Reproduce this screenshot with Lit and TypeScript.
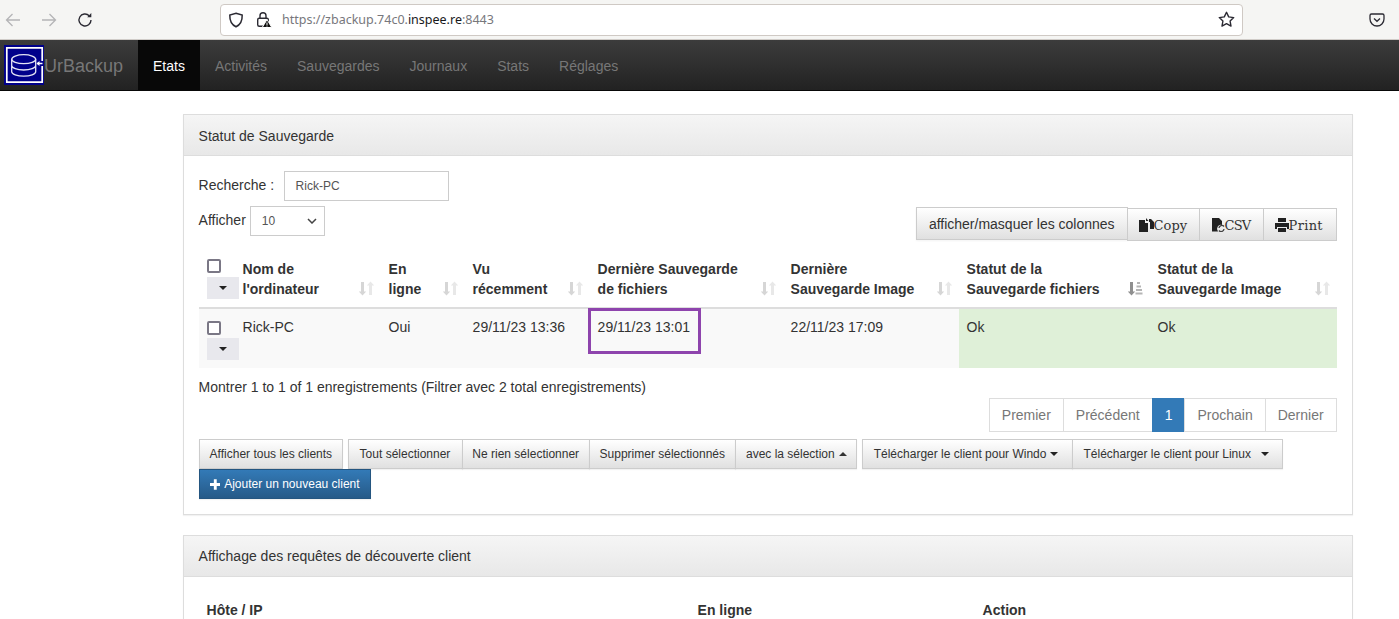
import { LitElement, html, css, svg } from "lit";
import { customElement } from "lit/decorators.js";

const sortBoth = svg`<svg class="sort" width="15" height="15" viewBox="0 0 15 15"><path d="M2 1h3v9.500h2.200L3.500 14.500-.2 10.500H2z" fill="#d6d6d6"/><path d="M10 14h3V4.500h2.200L11.500.5 7.800 4.500H10z" fill="#e8e8e8"/></svg>`;
const sortAmt = svg`<svg class="sort" width="15" height="15" viewBox="0 0 15 15"><path d="M2 1h3v9.500h2.200L3.500 14.500-.2 10.500H2z" fill="#8f8f8f"/><path d="M9 1h3v2H9zM8.500 4.500h4.500v2H8.500zM8 8h6v2H8zM7.500 11.500h7v2h-7z" fill="#b5b5b5"/></svg>`;

@customElement("app-root")
export class AppRoot extends LitElement {
  static styles = css`
    :host { display: block; height: 619px; overflow: hidden; background: #fff; font-family: "Liberation Sans", Arial, sans-serif; font-size: 14px; line-height: 20px; color: #333; }
    * { box-sizing: border-box; }
    .chrome { height: 40px; background: #f5f5f3; border-bottom: 1px solid #d0ccc8; display: flex; align-items: center; padding: 0 0 0 5px; }
    .nav-ic { width: 16px; height: 16px; display: block; }
    .ic-back { margin-right: 20px; }
    .ic-fwd { margin-right: 20px; }
    .url { margin-left: 127px; width: 1023px; height: 32px; background: #fff; border: 1px solid #cfc9c4; border-radius: 4px; display: flex; align-items: center; padding-left: 7px; font-family: "Noto Sans", sans-serif; font-size: 12.5px; color: #77777c; }
    .url b { font-weight: 400; color: #17171a; }
    .url .shield { margin-right: 11px; }
    .url .lock { margin-right: 10px; }
    .url .addr { flex: 1; white-space: nowrap; }
    .url .star { margin-right: 7px; }
    .pocket { margin-left: 126px; }
    .navbar { height: 51px; background: linear-gradient(#3c3c3c, #222); border-bottom: 1px solid #080808; display: flex; }
    .brand { width: 138px; display: flex; align-items: center; padding-left: 4px; font-size: 18px; color: #777; }
    .brand span { padding-top: 1px; }
    .logo { display: block; width: 40px; height: 40px; }
    .navbar a { display: block; padding: 16px 15px 14px; line-height: 20px; color: #777; font-size: 14px; }
    .navbar a.active { color: #fff; background: #080808; }
    .main { padding: 23px 46.400px 0 182.600px; }
    .panel { border: 1px solid #ddd; margin-bottom: 20px; box-shadow: 0 1px 1px rgba(0,0,0,.05); }
    .head { height: 41px; padding: 10px 15px; background: linear-gradient(#f5f5f5, #e8e8e8); border-bottom: 1px solid #ddd; color: #333; }
    .head.first { padding-top: 11px; }
    .body { padding: 15px; }
    .search-row { height: 30px; display: flex; align-items: center; }
    .search-row span { position: relative; top: -1px; }
    .search { margin-left: 9.500px; width: 165px; height: 30px; border: 1px solid #ccc; padding: 0 11px; display: flex; align-items: center; font-size: 12px; color: #555; }
    .len-row { display: flex; justify-content: space-between; height: 36px; margin-top: 5px; }
    .len { display: flex; height: 30px; align-items: center; gap: 4px; }
    .len span { position: relative; top: -1px; }
    .select { width: 75px; height: 30px; border: 1px solid #ccc; display: flex; justify-content: space-between; align-items: center; padding: 0 7px 0 11px; font-size: 12px; color: #555; }
    .tools { display: flex; align-items: flex-start; margin-top: 1px; }
    .btn { background: linear-gradient(#fff, #e0e0e0); border: 1px solid #ccc; color: #333; white-space: nowrap; display: flex; align-items: center; }
    .tools .main-b { height: 33px; padding: 0 12px; box-shadow: 0 1px 2px rgba(0,0,0,.05); }
    .tools .ex { height: 33px; margin-top: 1px; margin-left: -1px; padding: 0 12px 0 11px; font-family: "DejaVu Serif", serif; font-size: 13px; position: relative; }
    .tools .ex span { position: relative; top: 1px; }
    .tools .ex svg { display: block; flex: none; }
    .tools .copy { width: 73px; margin-left: -1px; }
    .tools .csv { width: 65px; letter-spacing: -.9px; }
    .tools .print { width: 74px; letter-spacing: .3px; }
    table { width: 100%; table-layout: fixed; border-collapse: collapse; margin-top: 8px; }
    th { text-align: left; font-weight: 700; padding: 8px; vertical-align: bottom; border-bottom: 2px solid #ddd; position: relative; height: 58px; }
    th .sort { position: absolute; right: 7px; bottom: 11px; }
    td { padding: 8px; vertical-align: top; height: 60px; background: #f9f9f9; position: relative; }
    td.ok { background: #dff0d8; }
    th.sel, td.sel { padding: 0 8px; vertical-align: top; }
    th.sel { padding-top: 9px; }
    td.sel { padding-top: 12px; }
    .check { width: 14px; height: 14px; border: 2px solid #7a7785; border-radius: 2px; background: #fff; display: block; }
    th .check { margin-bottom: 4px; }
    td .check { margin-bottom: 3px; }
    .drop { width: 32px; height: 22px; background: #e8e8ed; display: flex; align-items: center; justify-content: center; position: relative; z-index: 1; }
    .caret { display: inline-block; width: 0; height: 0; border-left: 4px solid transparent; border-right: 4px solid transparent; border-top: 4px solid #222; }
    .caret.up { border-top: 0; border-bottom: 4px solid #333; }
    .mark { position: absolute; left: -2px; top: -1px; width: 113px; height: 46px; border: 3px solid #8e44ad; pointer-events: none; }
    .info { margin-top: 9px; height: 21px; }
    .pager-row { display: flex; justify-content: flex-end; }
    .pager { display: flex; height: 34px; }
    .pager a { padding: 6px 12px; border: 1px solid #ddd; margin-left: -1px; color: #777; background: #fff; }
    .pager a.on { background: #337ab7; border-color: #337ab7; color: #fff; }
    .actions { display: flex; flex-wrap: wrap; margin-top: 7px; font-size: 12px; line-height: 18px; }
    .actions .btn { height: 30px; padding: 0 10px; margin-left: -1px; box-shadow: 0 1px 1px rgba(0,0,0,.05); }
    .actions .btn:first-child { margin-left: 0; }
    .actions .gap { margin-left: 5px; }
    .actions .btn .caret { margin-left: 4px; }
    .actions .tout { padding: 0 11.500px 0 10.500px; }
    .actions .nerien { padding: 0 9.500px; }
    .actions .avec { padding: 0 9.500px 0 10px; }
    .actions .dl { padding: 0 13.500px 0 10.500px; }
    .actions .btn .caret.wide { margin-left: 10px; }
    .actions .break { flex-basis: 100%; height: 0; }
    .actions .add { margin-left: 0; background: linear-gradient(#337ab7, #265a88); border-color: #245580; color: #fff; width: 172px; gap: 4px; }
    .sub { display: grid; grid-template-columns: 491px 285px 1fr; padding: 8px; font-weight: 700; }
  `;

  render() {
    return html`
      <div class="chrome">
        <svg class="nav-ic ic-back" viewBox="0 0 16 16" fill="none" stroke="#b4b4b6" stroke-width="1.300"><path d="M15 8H1.500M7.500 2 1.500 8l6 6"/></svg>
        <svg class="nav-ic ic-fwd" viewBox="0 0 16 16" fill="none" stroke="#b4b4b6" stroke-width="1.300"><path d="M1 8h13.500M8.500 2l6 6-6 6"/></svg>
        <svg class="nav-ic" viewBox="0 0 16 16" fill="none" stroke="#2b2a33" stroke-width="1.400"><path d="M14 8a6 6 0 1 1-1.800-4.300"/><path d="M14.300 1v4.200H10.200" fill="#2b2a33" stroke="none"/></svg>
        <div class="url">
          <svg class="shield" width="16" height="16" viewBox="0 0 16 16" fill="none" stroke="#2b2a33" stroke-width="1.500"><path d="M8 1.200 14.200 3c.2 6-1.500 9.600-6.200 11.800C3.300 12.600 1.600 9 1.800 3z"/></svg>
          <svg class="lock" width="17" height="17" viewBox="0 0 17 17"><path d="M5 7.500V4.800a3 3 0 0 1 6 0v2.700" fill="none" stroke="#2b2a33" stroke-width="1.400"/><rect x="2.700" y="7.300" width="10.600" height="8" rx="1.500" fill="#fff" stroke="#2b2a33" stroke-width="1.400"/><path d="M12 8.500l4.800 8H7.200z" fill="#111" stroke="#fff"/><path d="M11.500 11.500h1v2.500h-1zM11.500 14.600h1v1h-1z" fill="#fff"/></svg>
          <span class="addr">https://zbackup.74c0.<b>inspee.re</b>:8443</span>
          <svg class="star" width="17" height="17" viewBox="0 0 17 17" fill="none" stroke="#2b2a33" stroke-width="1.400" stroke-linejoin="round"><path d="M8.500 1.300l2.200 4.600 5 .7-3.600 3.500.9 5-4.500-2.400L4 15.100l.9-5L1.300 6.600l5-.7z"/></svg>
        </div>
        <svg class="pocket" width="16" height="16" viewBox="0 0 16 16" fill="none" stroke="#2b2a33" stroke-width="1.300"><path d="M2.500 2h11A1.500 1.500 0 0 1 15 3.500V7a7 7 0 0 1-14 0V3.500A1.500 1.500 0 0 1 2.500 2z"/><path d="M5 6.500l3 2.800 3-2.800"/></svg>
      </div>
      <div class="navbar">
        <div class="brand">
          <svg class="logo" viewBox="0 0 40 40"><rect width="40" height="40" fill="#00008b"/><path d="M38.200 16V2.800H2.800v34.400h35.400V21" fill="none" stroke="#fff" stroke-width="1.700"/><g fill="none" stroke="#e4e4f4" stroke-width="1.300"><ellipse cx="19.700" cy="14.200" rx="12" ry="4.500"/><path d="M7.700 14.200v12.500c0 2.500 5.400 4.500 12 4.500s12-2 12-4.500V14.200M7.700 20.500c0 2.500 5.400 4.500 12 4.500s12-2 12-4.500"/></g><path d="M33 18.500h5.500" stroke="#fff" stroke-width="1.500"/><path d="M32.500 18.500l3-2.600v5.200z" fill="#fff"/></svg>
          <span>UrBackup</span>
        </div>
        <a class="active">Etats</a><a>Activités</a><a>Sauvegardes</a><a>Journaux</a><a>Stats</a><a>Réglages</a>
      </div>
      <div class="main">
        <section class="panel">
          <div class="head first">Statut de Sauvegarde</div>
          <div class="body">
            <div class="search-row"><span>Recherche :</span><div class="search">Rick-PC</div></div>
            <div class="len-row">
              <div class="len"><span>Afficher</span><div class="select">10
                <svg width="10" height="6" viewBox="0 0 10 6" fill="none" stroke="#444" stroke-width="1.500"><path d="M1 1l4 4 4-4"/></svg></div></div>
              <div class="tools">
                <div class="btn main-b">afficher/masquer les colonnes</div>
                <div class="btn ex copy"><svg width="15" height="14" viewBox="0 0 15 14"><path d="M0 2h6v3h3v9H0z" fill="#222"/><path d="M7 0l2.500 3H7zM10 1h2l3 3v7h-4V4h-1z" fill="#222"/></svg><span>Copy</span></div>
                <div class="btn ex csv"><svg width="14" height="15" viewBox="0 0 14 15"><path d="M1 1h7l3 3v4a4 4 0 0 0-4 6.500H1z" fill="#222"/><path d="M8 11a2.800 2.800 0 0 1 5-1.500M13 12a2.800 2.800 0 0 1-5 1.500" fill="none" stroke="#444" stroke-width="1.300"/></svg><span>CSV</span></div>
                <div class="btn ex print"><svg width="14" height="14" viewBox="0 0 14 14"><path d="M3 0h8v4H3zM0 5h14v6h-2V9H2v2H0zM3 10h8v4H3z" fill="#222"/></svg><span>Print</span></div>
              </div>
            </div>
            <table>
              <colgroup><col style="width:36px"><col style="width:146px"><col style="width:84px"><col style="width:125px"><col style="width:193px"><col style="width:176px"><col style="width:191px"><col style="width:187px"></colgroup>
              <thead><tr>
                <th class="sel"><span class="check"></span><div class="drop"><span class="caret"></span></div></th>
                <th>Nom de<br>l'ordinateur${sortBoth}</th>
                <th>En<br>ligne${sortBoth}</th>
                <th>Vu<br>récemment${sortBoth}</th>
                <th>Dernière Sauvegarde<br>de fichiers${sortBoth}</th>
                <th>Dernière<br>Sauvegarde Image${sortBoth}</th>
                <th>Statut de la<br>Sauvegarde fichiers${sortAmt}</th>
                <th>Statut de la<br>Sauvegarde Image${sortBoth}</th>
              </tr></thead>
              <tbody><tr>
                <td class="sel"><span class="check"></span><div class="drop"><span class="caret"></span></div></td>
                <td>Rick-PC</td><td>Oui</td><td>29/11/23 13:36</td>
                <td>29/11/23 13:01<div class="mark"></div></td>
                <td>22/11/23 17:09</td><td class="ok">Ok</td><td class="ok">Ok</td>
              </tr></tbody>
            </table>
            <div class="info">Montrer 1 to 1 of 1 enregistrements (Filtrer avec 2 total enregistrements)</div>
            <div class="pager-row"><div class="pager"><a>Premier</a><a>Précédent</a><a class="on">1</a><a>Prochain</a><a>Dernier</a></div></div>
            <div class="actions">
              <div class="btn">Afficher tous les clients</div>
              <div class="btn gap tout">Tout sélectionner</div>
              <div class="btn nerien">Ne rien sélectionner</div>
              <div class="btn">Supprimer sélectionnés</div>
              <div class="btn avec">avec la sélection<span class="caret up"></span></div>
              <div class="btn gap dl">Télécharger le client pour Windo<span class="caret"></span></div>
              <div class="btn dl">Télécharger le client pour Linux<span class="caret wide"></span></div>
              <div class="break"></div>
              <div class="btn add"><svg width="11" height="11" viewBox="0 0 11 11"><path d="M4 0h3v4h4v3H7v4H4V7H0V4h4z" fill="#fff"/></svg>Ajouter un nouveau client</div>
            </div>
          </div>
        </section>
        <section class="panel">
          <div class="head">Affichage des requêtes de découverte client</div>
          <div class="body"><div class="sub"><span>Hôte / IP</span><span>En ligne</span><span>Action</span></div></div>
        </section>
      </div>
    `;
  }
}
